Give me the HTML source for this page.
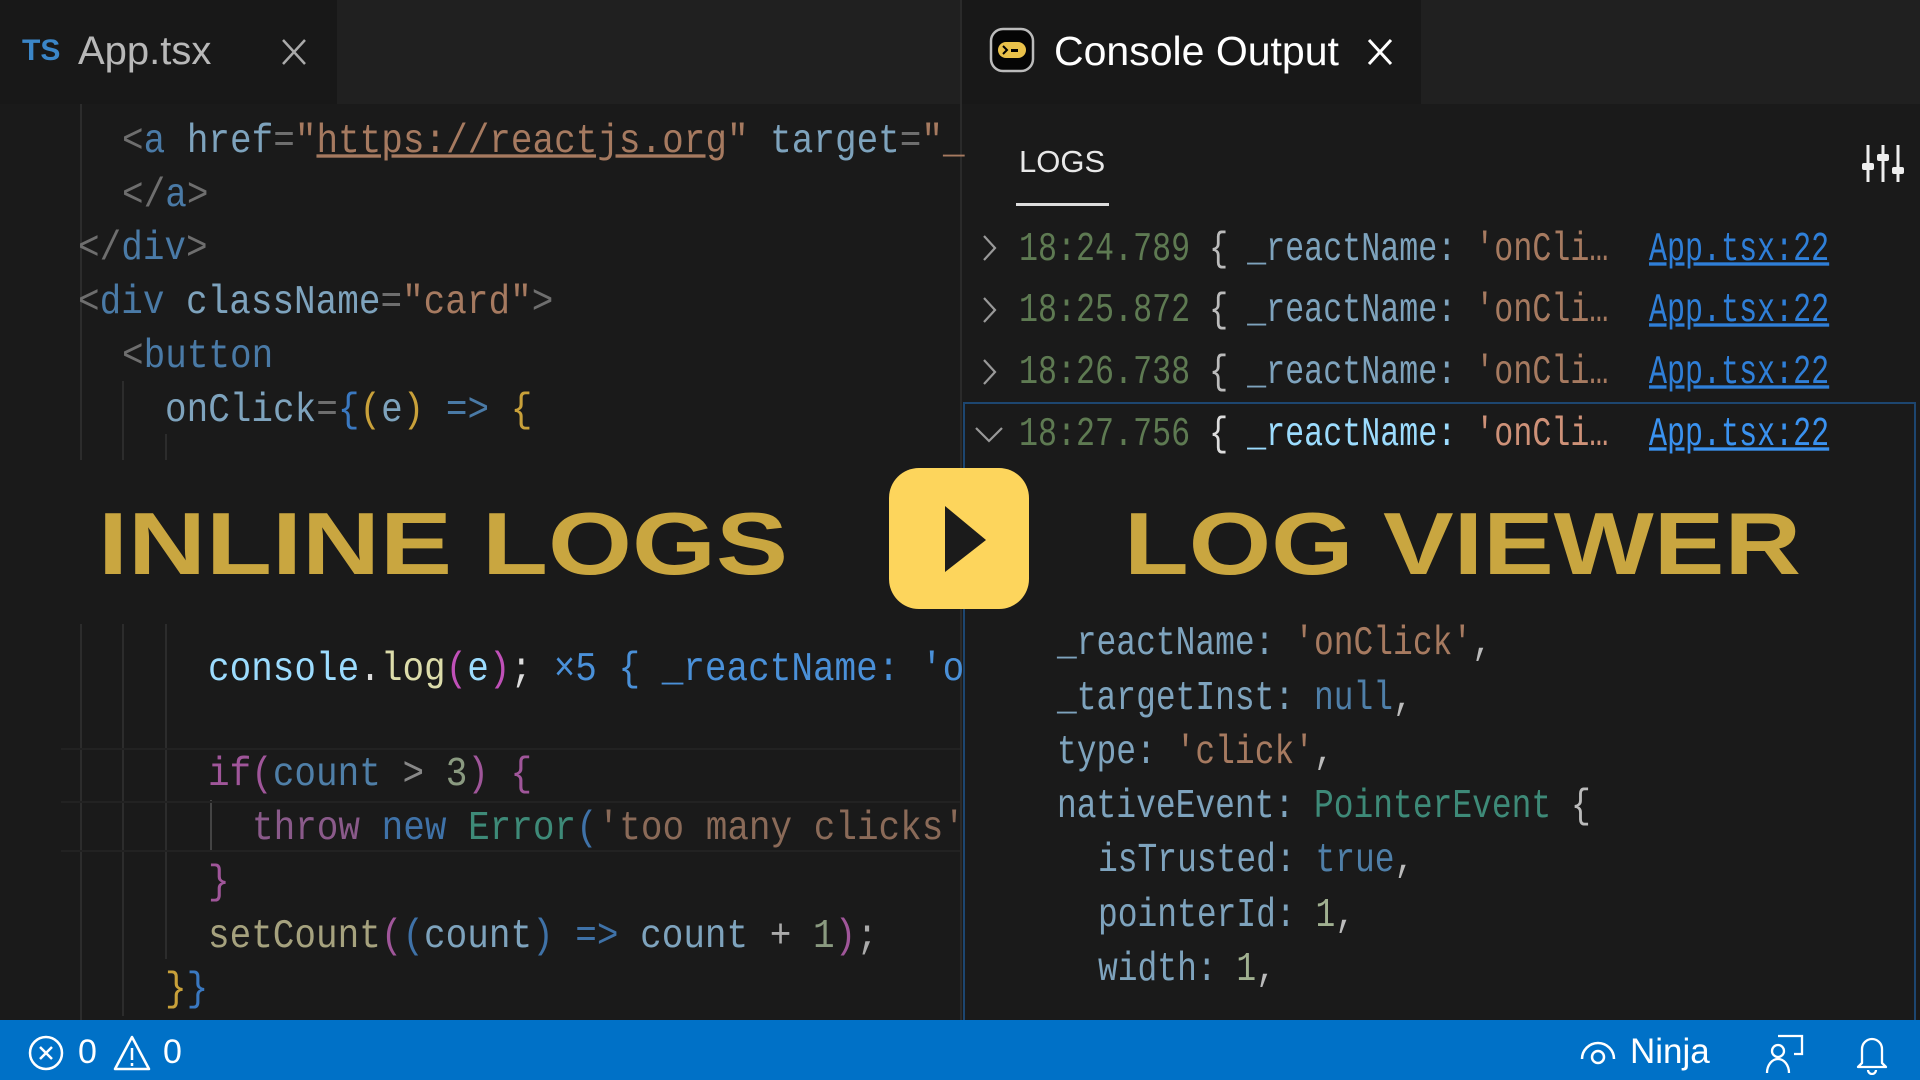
<!DOCTYPE html>
<html><head><meta charset="utf-8"><style>
*{margin:0;padding:0;box-sizing:border-box}
body{width:1920px;height:1080px;background:#1b1b1b;overflow:hidden;position:relative;font-family:"Liberation Sans",sans-serif}
.abs{position:absolute}
.code{position:absolute;font-family:"Liberation Mono",monospace;font-size:36px;white-space:pre;line-height:54px;transform:translateY(4px) scaleY(1.12);transform-origin:left center}
.g{color:#6e6e6e}.t{color:#4a7aa6}.a{color:#7ea3bd}.s{color:#a67a60}.y{color:#c9a13a}.b{color:#3a78c0}
.guide{position:absolute;width:2px;background:#2c2c2c}
.lg{position:absolute;font-family:"Liberation Mono",monospace;font-size:36px;white-space:pre;line-height:54px;transform:translateY(4px) scale(0.88,1.12);transform-origin:left center}
.dt{position:absolute;font-family:"Liberation Mono",monospace;font-size:36px;white-space:pre;line-height:54px;transform:translateY(4px) scale(0.915,1.12);transform-origin:left center}
.ts{color:#5e7a52}.k{color:#7ea3bd}.st{color:#a67a60}.lk{color:#2f7fd8;text-decoration:underline}
</style></head><body>
<div class="abs" style="left:0;top:0;width:1920px;height:104px;background:#202020"></div>
<div class="abs" style="left:0;top:0;width:337px;height:104px;background:#181818"></div>
<div class="abs" style="left:22px;top:34px;color:#3b86c8;font-weight:bold;font-size:30px">TS</div>
<div class="abs" style="left:78px;top:29px;color:#b8b8b8;font-size:40px">App.tsx</div>
<svg class="abs" style="left:280px;top:37px" width="28" height="30"><path d="M3 3L25 27M25 3L3 27" stroke="#aaa" stroke-width="2.5"/></svg>
<div class="abs" style="left:960px;top:0;width:461px;height:104px;background:#181818"></div>
<div class="abs" style="left:960px;top:0;width:2px;height:1020px;background:#2a2a2a"></div>
<div class="abs" style="left:0;top:104px;width:960px;height:916px;background:#1a1a1a"></div>
<div class="abs" style="left:962px;top:104px;width:958px;height:916px;background:#1a1a1a"></div>

<svg class="abs" style="left:989px;top:27px" width="46" height="46"><rect x="2" y="2" width="42" height="42" rx="12" fill="#050505" stroke="#bbb" stroke-width="2.5"/><rect x="9" y="15" width="28" height="16" rx="8" fill="#e9c14a"/><path d="M14 19l4 4-4 4" stroke="#000" stroke-width="2" fill="none"/><rect x="22" y="22" width="7" height="3" fill="#000"/></svg>
<div class="abs" style="left:1054px;top:28px;color:#fff;font-size:41px">Console Output</div>
<svg class="abs" style="left:1366px;top:37px" width="28" height="30"><path d="M3 3L25 27M25 3L3 27" stroke="#fff" stroke-width="3"/></svg>

<div class="guide" style="left:80px;top:104px;height:356px"></div>
<div class="guide" style="left:122px;top:381px;height:79px"></div>
<div class="guide" style="left:165px;top:434px;height:26px"></div>
<div class="guide" style="left:80px;top:624px;height:396px"></div>
<div class="guide" style="left:122px;top:624px;height:392px"></div>
<div class="guide" style="left:165px;top:624px;height:335px"></div>
<div class="guide" style="left:210px;top:800px;height:52px;background:#444"></div>
<div class="abs" style="left:61px;top:748px;width:899px;height:2px;background:#222"></div>
<div class="abs" style="left:61px;top:801px;width:899px;height:2px;background:#222"></div>
<div class="abs" style="left:61px;top:850px;width:899px;height:2px;background:#222"></div>

<div class="code" style="left:122px;top:111px"><span class="g">&lt;</span><span class="t">a</span> <span class="a">href</span><span class="g">=</span><span class="s">"<u>https://reactjs.org</u>"</span> <span class="a">target</span><span class="g">=</span><span class="s">"_</span></div>
<div class="code" style="left:122px;top:165px"><span class="g">&lt;/</span><span class="t">a</span><span class="g">&gt;</span></div>
<div class="code" style="left:78px;top:218px"><span class="g">&lt;/</span><span class="t">div</span><span class="g">&gt;</span></div>
<div class="code" style="left:78px;top:272px"><span class="g">&lt;</span><span class="t">div</span> <span class="a">className</span><span class="g">=</span><span class="s">"card"</span><span class="g">&gt;</span></div>
<div class="code" style="left:122px;top:326px"><span class="g">&lt;</span><span class="t">button</span></div>
<div class="code" style="left:165px;top:380px"><span class="a">onClick</span><span class="g">=</span><span class="b">{</span><span class="y">(</span><span class="a">e</span><span class="y">)</span> <span class="t">=&gt;</span> <span class="y">{</span></div>

<div class="code" style="left:208px;top:639px"><span style="color:#9cdcfe">console</span><span style="color:#ddd">.</span><span style="color:#dcdcaa">log</span><span style="color:#c050b8">(</span><span style="color:#9cdcfe">e</span><span style="color:#c050b8">)</span><span style="color:#ddd">;</span> <span style="color:#4a90d8">×5 { _reactName: 'o</span></div>
<div class="code" style="left:208px;top:744px"><span style="color:#a0569a">if</span><span style="color:#a0569a">(</span><span style="color:#4f7fa8">count</span> <span style="color:#888">&gt;</span> <span style="color:#8a9a80">3</span><span style="color:#a0569a">)</span> <span style="color:#a0569a">{</span></div>
<div class="code" style="left:252px;top:798px"><span style="color:#8a5a8a">throw</span> <span style="color:#3f72a8">new</span> <span style="color:#3e8a78">Error</span><span style="color:#3f72a8">(</span><span style="color:#8a6a58">'too many clicks'</span></div>
<div class="code" style="left:208px;top:852px"><span style="color:#a0569a">}</span></div>
<div class="code" style="left:208px;top:906px"><span style="color:#a6a27e">setCount</span><span style="color:#a0569a">(</span><span style="color:#3f72a8">(</span><span style="color:#7ea3bd">count</span><span style="color:#3f72a8">)</span> <span style="color:#3f72a8">=&gt;</span> <span style="color:#7ea3bd">count</span> <span style="color:#aaa">+</span> <span style="color:#8a9a80">1</span><span style="color:#a0569a">)</span><span style="color:#aaa">;</span></div>
<div class="code" style="left:165px;top:959px"><span class="y">}</span><span class="b">}</span></div>

<div class="abs" style="left:1019px;top:144px;color:#e8e8e8;font-size:31px">LOGS</div>
<div class="abs" style="left:1016px;top:203px;width:93px;height:3px;background:#ddd"></div>
<svg class="abs" style="left:1858px;top:140px" width="50" height="46"><g stroke="#eee" stroke-width="3"><path d="M10 5v37M25 5v37M40 5v37"/></g><rect x="4" y="23" width="12" height="7" rx="2" fill="#eee"/><rect x="19" y="14" width="12" height="7" rx="2" fill="#eee"/><rect x="34" y="27" width="12" height="7" rx="2" fill="#eee"/></svg>

<div class="abs" style="left:963px;top:402px;width:953px;height:620px;border:2px solid #1d4670;border-bottom:none"></div>

<svg class="abs" style="left:980px;top:233px" width="20" height="30"><path d="M4 3l11 12-11 12" stroke="#999" stroke-width="2.2" fill="none"/></svg>
<svg class="abs" style="left:980px;top:295px" width="20" height="30"><path d="M4 3l11 12-11 12" stroke="#999" stroke-width="2.2" fill="none"/></svg>
<svg class="abs" style="left:980px;top:357px" width="20" height="30"><path d="M4 3l11 12-11 12" stroke="#999" stroke-width="2.2" fill="none"/></svg>
<svg class="abs" style="left:973px;top:424px" width="32" height="20"><path d="M3 4l13 13 13-13" stroke="#999" stroke-width="2.2" fill="none"/></svg>

<div class="lg" style="left:1019px;top:219px"><span class="ts">18:24.789</span> <span style="color:#bbb">{</span> <span class="k">_reactName:</span> <span class="st">'onCli…</span></div>
<div class="lg" style="left:1019px;top:280px"><span class="ts">18:25.872</span> <span style="color:#bbb">{</span> <span class="k">_reactName:</span> <span class="st">'onCli…</span></div>
<div class="lg" style="left:1019px;top:342px"><span class="ts">18:26.738</span> <span style="color:#bbb">{</span> <span class="k">_reactName:</span> <span class="st">'onCli…</span></div>
<div class="lg" style="left:1019px;top:404px"><span class="ts">18:27.756</span> <span style="color:#ddd">{</span> <span style="color:#9cdcfe">_reactName:</span> <span style="color:#ce9178">'onCli…</span></div>
<div class="lg" style="left:1649px;top:219px;transform:translateY(4px) scale(0.834,1.12)"><span class="lk">App.tsx:22</span></div>
<div class="lg" style="left:1649px;top:280px;transform:translateY(4px) scale(0.834,1.12)"><span class="lk">App.tsx:22</span></div>
<div class="lg" style="left:1649px;top:342px;transform:translateY(4px) scale(0.834,1.12)"><span class="lk">App.tsx:22</span></div>
<div class="lg" style="left:1649px;top:404px;transform:translateY(4px) scale(0.834,1.12)"><span class="lk" style="color:#3a92f0">App.tsx:22</span></div>

<div class="dt" style="left:1057px;top:613px"><span class="k">_reactName:</span> <span class="st">'onClick'</span><span style="color:#bbb">,</span></div>
<div class="dt" style="left:1057px;top:668px"><span class="k">_targetInst:</span> <span style="color:#4f7fa8">null</span><span style="color:#bbb">,</span></div>
<div class="dt" style="left:1057px;top:722px"><span class="k">type:</span> <span class="st">'click'</span><span style="color:#bbb">,</span></div>
<div class="dt" style="left:1057px;top:776px"><span class="k">nativeEvent:</span> <span style="color:#3e8a78">PointerEvent</span> <span style="color:#bbb">{</span></div>
<div class="dt" style="left:1098px;top:830px"><span class="k">isTrusted:</span> <span style="color:#4f7fa8">true</span><span style="color:#bbb">,</span></div>
<div class="dt" style="left:1098px;top:885px"><span class="k">pointerId:</span> <span style="color:#a0b090">1</span><span style="color:#bbb">,</span></div>
<div class="dt" style="left:1098px;top:939px"><span class="k">width:</span> <span style="color:#a0b090">1</span><span style="color:#bbb">,</span></div>

<svg class="abs" style="left:0;top:0" width="1920" height="1080">
<text x="98" y="574" textLength="690" lengthAdjust="spacingAndGlyphs" font-family="Liberation Sans" font-weight="bold" font-size="88" fill="#c9a640">INLINE LOGS</text>
<text x="1124" y="574" textLength="677" lengthAdjust="spacingAndGlyphs" font-family="Liberation Sans" font-weight="bold" font-size="88" fill="#c9a640">LOG VIEWER</text>
<rect x="889" y="468" width="140" height="141" rx="30" fill="#fdd55c"/>
<path d="M945 506L986 540L945 572Z" fill="#1b1b1b"/>
</svg>

<div class="abs" style="left:0;top:1020px;width:1920px;height:60px;background:#0071c7"></div>
<svg class="abs" style="left:28px;top:1034px" width="140" height="40"><circle cx="18" cy="19" r="16" stroke="#fff" stroke-width="2.5" fill="none"/><path d="M12 13l12 12M24 13l-12 12" stroke="#fff" stroke-width="2.5"/><path d="M104 3L87 35h34z" stroke="#fff" stroke-width="2.5" fill="none" stroke-linejoin="round"/><path d="M104 14v12M104 29v3" stroke="#fff" stroke-width="2.5"/></svg>
<div class="abs" style="left:78px;top:1033px;color:#fff;font-size:34px">0</div>
<div class="abs" style="left:163px;top:1033px;color:#fff;font-size:34px">0</div>
<svg class="abs" style="left:1578px;top:1037px" width="40" height="30"><path d="M4 22a16 16 0 0 1 32 0" stroke="#fff" stroke-width="2.5" fill="none"/><circle cx="20" cy="20" r="6" stroke="#fff" stroke-width="2.5" fill="none"/></svg>
<div class="abs" style="left:1630px;top:1032px;color:#fff;font-size:35px">Ninja</div>
<svg class="abs" style="left:1764px;top:1033px" width="42" height="42"><path d="M14 3h24v18h-8" stroke="#fff" stroke-width="2.3" fill="none"/><circle cx="14" cy="18" r="6" stroke="#fff" stroke-width="2.3" fill="none"/><path d="M3 40c0-8 5-14 11-14s11 6 11 14" stroke="#fff" stroke-width="2.3" fill="none"/></svg>
<svg class="abs" style="left:1853px;top:1033px" width="38" height="42"><path d="M9 30V16a10 10 0 0 1 20 0v14l4 4H5z" stroke="#fff" stroke-width="2.3" fill="none" stroke-linejoin="round"/><path d="M15 37a4 4 0 0 0 8 0" stroke="#fff" stroke-width="2.3" fill="none"/></svg>
</body></html>
